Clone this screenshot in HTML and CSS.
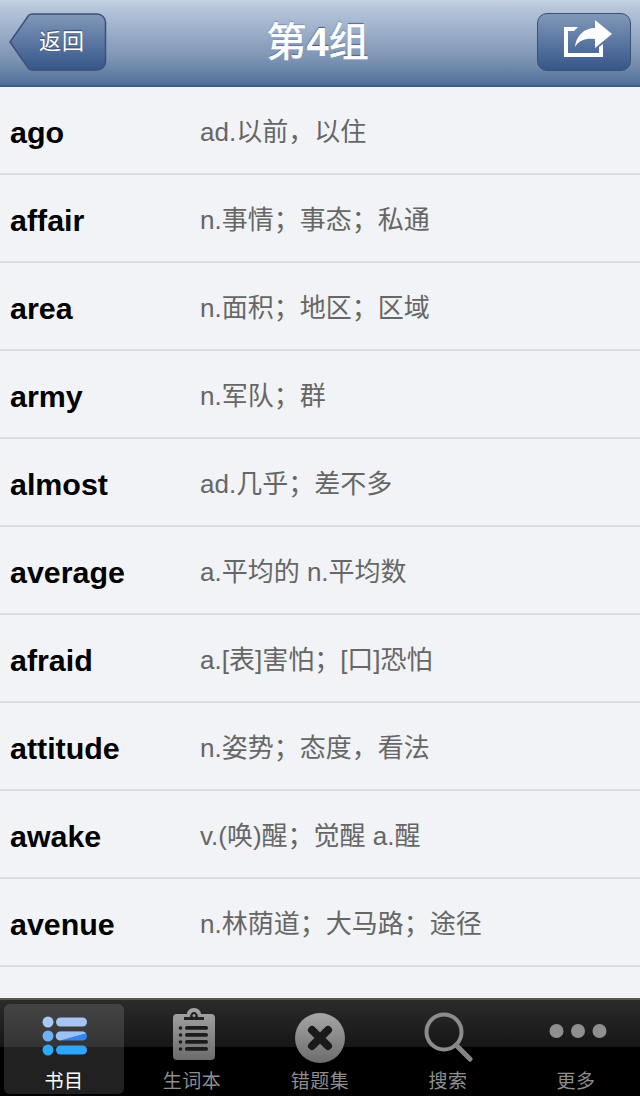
FILE: index.html
```html
<!DOCTYPE html>
<html lang="zh">
<head>
  <meta charset="UTF-8">
  <title>第4组</title>
  <link rel="stylesheet" href="styles.css">
</head>
<body>
  <div class="app">
    <header class="navbar">
      <a class="back-btn">
        <svg class="back-shape" width="98" height="60" viewBox="0 0 98 60">
          <defs>
            <linearGradient id="btnfill" x1="0" y1="0" x2="0" y2="1">
              <stop offset="0" stop-color="#8098b8"/>
              <stop offset="1" stop-color="#36568a"/>
            </linearGradient>
          </defs>
          <path d="M23 1H88a8.500 8.500 0 0 1 8.500 8.500v39a8.500 8.500 0 0 1-8.500 8.500H23a5 5 0 0 1-3.500-1.500L1 29 19.500 2.500A5 5 0 0 1 23 1Z" fill="url(#btnfill)" stroke="#3b5274" stroke-width="1.500"/>
        </svg>
        <span class="back-label">返回</span>
      </a>
      <h1 class="nav-title">第<b>4</b>组</h1>
      <a class="share-btn">
        <svg width="48" height="38" viewBox="0 0 48 38">
          <path d="M0 7H14L10 11H4V33H35V27L39 24V37H0Z" fill="#fff"/>
          <path d="M11 27C12 16 20 8 31 8V0L48 14 31 28V19C22 18 15 20 11 27Z" fill="#fff"/>
        </svg>
      </a>
    </header>

    <main class="word-list">
      <div class="row"><span class="word">ago</span><span class="meaning">ad.以前，以住</span></div>
      <div class="row"><span class="word">affair</span><span class="meaning">n.事情；事态；私通</span></div>
      <div class="row"><span class="word">area</span><span class="meaning">n.面积；地区；区域</span></div>
      <div class="row"><span class="word">army</span><span class="meaning">n.军队；群</span></div>
      <div class="row"><span class="word">almost</span><span class="meaning">ad.几乎；差不多</span></div>
      <div class="row"><span class="word">average</span><span class="meaning">a.平均的 n.平均数</span></div>
      <div class="row"><span class="word">afraid</span><span class="meaning">a.[表]害怕；[口]恐怕</span></div>
      <div class="row"><span class="word">attitude</span><span class="meaning">n.姿势；态度，看法</span></div>
      <div class="row"><span class="word">awake</span><span class="meaning">v.(唤)醒；觉醒 a.醒</span></div>
      <div class="row"><span class="word">avenue</span><span class="meaning">n.林荫道；大马路；途径</span></div>
    </main>

    <nav class="tabbar">
      <div class="tab active">
        <div class="icon-box">
          <svg class="icon-list" width="48" height="44" viewBox="0 0 48 44">
            <circle cx="7" cy="8" r="5.500" fill="#a9c8f2"/>
            <circle cx="7" cy="22" r="5.500" fill="#6fb0f3"/>
            <circle cx="7" cy="36" r="5.500" fill="#30a8fa"/>
            <rect x="15" y="3.500" width="31" height="9" rx="4.500" fill="#a6c5f2"/>
            <rect x="15" y="17.500" width="31" height="9" rx="4.500" fill="#2f86ec"/>
            <path d="M19.500 17.500H41.500a4.500 4.500 0 0 1 3.500 1.700L19 26.500a4.500 4.500 0 0 1 .5-9Z" fill="#9cc2f3"/>
            <rect x="15" y="31.500" width="31" height="9" rx="4.500" fill="#2ea6fb"/>
          </svg>
        </div>
        <span class="tab-label">书目</span>
      </div>
      <div class="tab">
        <div class="icon-box">
          <svg class="icon-notes" width="44" height="52" viewBox="0 0 44 52">
            <defs>
              <linearGradient id="gray" x1="0" y1="0" x2="0" y2="1">
                <stop offset="0" stop-color="#a6a6a6"/>
                <stop offset="1" stop-color="#6c6c6c"/>
              </linearGradient>
            </defs>
            <path d="M5 6H15C15 3 18 0 22 0S29 3 29 6H39a4 4 0 0 1 4 4V48a4 4 0 0 1-4 4H5a4 4 0 0 1-4-4V10a4 4 0 0 1 4-4Z" fill="url(#gray)"/>
            <path d="M12 12V9H18C18 6 20 4 22 4S26 6 26 9H32V12Z" fill="#222"/>
            <circle cx="22" cy="7.500" r="1.500" fill="#999"/>
            <g fill="#1c1c1c">
              <circle cx="8.500" cy="20" r="1.800"/><rect x="13" y="18" width="23" height="3.800" rx="1.900"/>
              <circle cx="8.500" cy="27" r="1.800"/><rect x="13" y="25" width="23" height="3.800" rx="1.900"/>
              <circle cx="8.500" cy="34" r="1.800"/><rect x="13" y="32" width="23" height="3.800" rx="1.900"/>
              <circle cx="8.500" cy="41" r="1.800"/><rect x="13" y="39" width="23" height="3.800" rx="1.900"/>
            </g>
          </svg>
        </div>
        <span class="tab-label">生词本</span>
      </div>
      <div class="tab">
        <div class="icon-box">
          <svg class="icon-wrong" width="52" height="52" viewBox="0 0 52 52">
            <circle cx="26" cy="26" r="25" fill="url(#gray)"/>
            <path d="M18 18L34 34M34 18L18 34" stroke="#1a1a1a" stroke-width="8" stroke-linecap="round"/>
          </svg>
        </div>
        <span class="tab-label">错题集</span>
      </div>
      <div class="tab">
        <div class="icon-box">
          <svg class="icon-search" width="50" height="50" viewBox="0 0 50 50">
            <circle cx="20" cy="20" r="17.500" fill="none" stroke="#8c8c8c" stroke-width="4"/>
            <path d="M32 33L46 47" stroke="#858585" stroke-width="5" stroke-linecap="round"/>
          </svg>
        </div>
        <span class="tab-label">搜索</span>
      </div>
      <div class="tab">
        <div class="icon-box">
          <svg class="icon-more" width="60" height="16" viewBox="0 0 60 16">
            <circle cx="8.500" cy="8" r="7" fill="#8f8f8f"/>
            <circle cx="30" cy="8" r="7" fill="#8f8f8f"/>
            <circle cx="51.500" cy="8" r="7" fill="#8f8f8f"/>
          </svg>
        </div>
        <span class="tab-label">更多</span>
      </div>
    </nav>
  </div>
</body>
</html>
```
FILE: styles.css
```css
* {
  box-sizing: border-box;
}

html, body {
  margin: 0;
  padding: 0;
}

body {
  font-family: "Liberation Sans", "Noto Sans CJK SC", sans-serif;
}

.app {
  width: 640px;
  height: 1096px;
  display: flex;
  flex-direction: column;
  overflow: hidden;
  background: #f1f3f6;
}

/* top bar */
.navbar {
  height: 87px;
  flex: none;
  display: flex;
  align-items: flex-start;
  justify-content: space-between;
  padding: 13px 9px 0 9px;
  background: linear-gradient(#c5d3e3, #b3c4d9 12%, #7c93b3 70%, #526f99);
  border-bottom: 2px solid #3f5d88;
  position: relative;
}

.back-btn {
  width: 98px;
  height: 58px;
  position: relative;
  display: flex;
  align-items: center;
  justify-content: center;
  padding-left: 8px;
}

.back-shape {
  position: absolute;
  left: 0;
  top: 0;
}

.back-label {
  position: relative;
  color: #fff;
  font-size: 22px;
  line-height: 26px;
  letter-spacing: 1px;
  text-shadow: 0 -1px 1px #33496b;
}

.nav-title {
  position: absolute;
  left: 0;
  right: 0;
  top: 16px;
  margin: 0;
  padding-right: 5px;
  text-align: center;
  color: #fff;
  font-size: 40px;
  line-height: 52px;
  font-weight: 400;
  -webkit-text-stroke: 0.7px #fff;
  text-shadow: 0 -1px 1px #46597a;
}

.nav-title b {
  font-weight: 700;
  -webkit-text-stroke: 0;
}

.share-btn {
  width: 94px;
  height: 58px;
  display: flex;
  align-items: center;
  justify-content: center;
  padding: 0 0 6px 8px;
  border: 1.5px solid #3b5274;
  border-radius: 10px;
  background: linear-gradient(#8098b8, #36568a);
}

/* word rows */
.word-list {
  flex: 1;
  overflow: hidden;
}

.row {
  height: 88px;
  display: flex;
  align-items: center;
  padding-left: 10px;
  border-bottom: 2px solid #dcdee1;
}

.word {
  width: 190px;
  flex: none;
  color: #000;
  font-size: 30.4px;
  font-weight: 700;
  padding-top: 5px;
}

.meaning {
  color: #666;
  font-size: 26px;
  padding-bottom: 1px;
}

/* bottom tabs */
.tabbar {
  height: 98px;
  flex: none;
  display: grid;
  grid-template-columns: repeat(5, 1fr);
  padding: 4px 0;
  border-top: 2px solid #555;
  background: linear-gradient(#2b2b2b 0, #161616 49%, #000 49%);
}

.tab {
  display: flex;
  flex-direction: column;
  align-items: center;
  border-radius: 6px;
}

.tab.active {
  margin: 0 4px;
  background: rgba(255, 255, 255, 0.13);
}

.icon-box {
  height: 64px;
  flex: none;
}

.icon-box svg {
  display: block;
}

.icon-list {
  margin: 10px 0 0 2px;
}

.icon-notes {
  margin: 4px 0 0 3px;
}

.icon-wrong {
  margin-top: 8px;
}

.icon-search {
  margin: 8px 0 0 2px;
}

.icon-more {
  margin: 19px 0 0 4px;
}

.tab-label {
  color: #8e8e8e;
  font-size: 19px;
  letter-spacing: 0.5px;
  line-height: 24px;
  padding-top: 2px;
}

.tab.active .tab-label {
  color: #fff;
}
```
